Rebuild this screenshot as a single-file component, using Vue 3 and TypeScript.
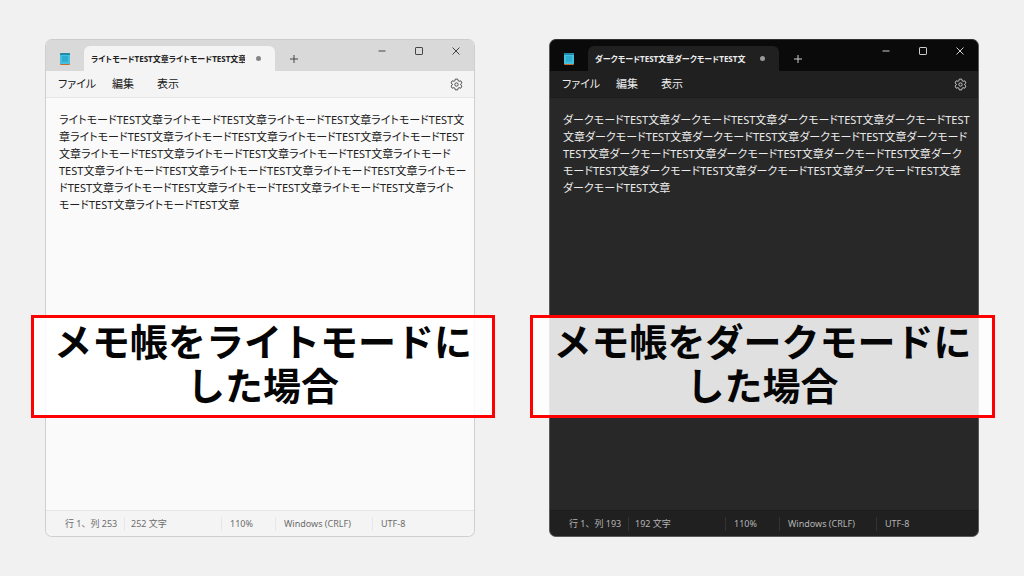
<script setup lang="ts">
interface Pad {
  theme: 'light' | 'dark'
  title: string
  lines: string[]
  status: string[]
  caption: string
}

const menus: string[] = ['ファイル', '編集', '表示']

const pads: Pad[] = [
  {
    theme: 'light',
    title: 'ライトモードTEST文章ライトモードTEST文章',
    lines: [
      'ライトモードTEST文章ライトモードTEST文章ライトモードTEST文章ライトモードTEST文',
      '章ライトモードTEST文章ライトモードTEST文章ライトモードTEST文章ライトモードTEST',
      '文章ライトモードTEST文章ライトモードTEST文章ライトモードTEST文章ライトモード',
      'TEST文章ライトモードTEST文章ライトモードTEST文章ライトモードTEST文章ライトモー',
      'ドTEST文章ライトモードTEST文章ライトモードTEST文章ライトモードTEST文章ライト',
      'モードTEST文章ライトモードTEST文章',
    ],
    status: ['行 1、列 253', '252 文字', '110%', 'Windows (CRLF)', 'UTF-8'],
    caption: 'メモ帳をライトモードに\nした場合',
  },
  {
    theme: 'dark',
    title: 'ダークモードTEST文章ダークモードTEST文',
    lines: [
      'ダークモードTEST文章ダークモードTEST文章ダークモードTEST文章ダークモードTEST',
      '文章ダークモードTEST文章ダークモードTEST文章ダークモードTEST文章ダークモード',
      'TEST文章ダークモードTEST文章ダークモードTEST文章ダークモードTEST文章ダーク',
      'モードTEST文章ダークモードTEST文章ダークモードTEST文章ダークモードTEST文章',
      'ダークモードTEST文章',
    ],
    status: ['行 1、列 193', '192 文字', '110%', 'Windows (CRLF)', 'UTF-8'],
    caption: 'メモ帳をダークモードに\nした場合',
  },
]
</script>

<template>
  <main class="page">
    <section v-for="pad in pads" :key="pad.theme" class="panel" :class="pad.theme">
      <div class="window">
        <header class="titlebar">
          <svg class="app-icon" viewBox="0 0 12 14" aria-hidden="true">
            <rect x="1" y="10" width="10" height="3" rx="1" fill="#c8682c" />
            <rect x="1" y="1" width="10" height="11" rx="1" fill="#43bfe0" />
            <path d="M1 2a1 1 0 0 1 1-1h8a1 1 0 0 1 1 1v1H1z" fill="#2389a8" />
            <path d="M3 5h6M3 7h6M3 9h6" stroke="#1c9ac2" stroke-width="1" />
          </svg>
          <button class="tab" type="button">
            <span class="tab-title">{{ pad.title }}</span>
            <span class="dot"></span>
          </button>
          <button class="icon-button add" type="button" aria-label="新しいタブ">
            <svg viewBox="0 0 10 10"><path d="M5 1v8M1 5h8" /></svg>
          </button>
          <div class="controls">
            <button class="icon-button" type="button" aria-label="最小化">
              <svg viewBox="0 0 10 10"><path d="M1.5 5h7" /></svg>
            </button>
            <button class="icon-button" type="button" aria-label="最大化">
              <svg viewBox="0 0 10 10"><rect x="1.5" y="1.5" width="7" height="7" rx="0.6" /></svg>
            </button>
            <button class="icon-button" type="button" aria-label="閉じる">
              <svg viewBox="0 0 10 10"><path d="M1.5 1.5l7 7M8.5 1.5l-7 7" /></svg>
            </button>
          </div>
        </header>
        <nav class="menubar">
          <button v-for="menu in menus" :key="menu" class="menu" type="button">{{ menu }}</button>
          <button class="icon-button settings" type="button" aria-label="設定">
            <svg viewBox="0 0 14 14">
              <path
                d="M5.7 1.2h2.6l.4 1.8 1.1.6 1.8-.6 1.3 2.3-1.4 1.2v1l1.4 1.2-1.3 2.3-1.8-.6-1.1.6-.4 1.8H5.7l-.4-1.8-1.1-.6-1.8.6-1.3-2.3 1.4-1.2v-1L1.1 5.3 2.4 3l1.8.6L5.3 3z"
              />
              <circle cx="7" cy="7" r="1.8" />
            </svg>
          </button>
        </nav>
        <textarea
          class="editor"
          wrap="off"
          spellcheck="false"
          aria-label="テキスト エディター"
          :value="pad.lines.join('\n')"
        ></textarea>
        <footer class="statusbar">
          <span v-for="item in pad.status" :key="item" class="status">{{ item }}</span>
        </footer>
      </div>
      <h2 class="caption">{{ pad.caption }}</h2>
    </section>
  </main>
</template>

<style>
body {
  margin: 0;
  background: #f1f1f1;
}
</style>

<style scoped>
.page {
  box-sizing: border-box;
  min-height: 100vh;
  display: grid;
  grid-template-columns: 1fr 1fr;
  gap: 74px;
  padding: 39px 45px;
  background: #f1f1f1;
  font-family: 'Noto Sans', 'Noto Sans CJK JP', sans-serif;
}

.panel {
  position: relative;
  display: flex;
  min-width: 0;
}

.light {
  --title: #d9d9d9;
  --bar: #f4f4f4;
  --paper: #fafafa;
  --line: #e6e6e6;
  --edge: #cfcfcf;
  --text: #202020;
  --muted: #6c6c6c;
  --dot: #868686;
  --icon: #444444;
}

.dark {
  --title: #0a0a0a;
  --bar: #202020;
  --paper: #282828;
  --line: #1d1d1d;
  --edge: #5a5a5a;
  --text: #ececec;
  --muted: #b4b4b4;
  --dot: #9a9a9a;
  --icon: #cfcfcf;
}

.window {
  flex: 1;
  min-width: 0;
  display: flex;
  flex-direction: column;
  box-sizing: border-box;
  border: 1px solid var(--edge);
  border-radius: 7px;
  overflow: hidden;
  background: var(--paper);
  color: var(--text);
}

.light .window {
  border-top-color: #cccccc;
}

.dark .window {
  border-top-color: #303030;
}

button {
  margin: 0;
  padding: 0;
  border: 0;
  background: none;
  color: inherit;
  font: inherit;
}

.titlebar {
  display: flex;
  align-items: flex-end;
  height: 31px;
  flex: none;
  background: var(--title);
}

.app-icon {
  width: 12px;
  height: 14px;
  margin: 0 13px 5px;
  flex: none;
}

.tab {
  position: relative;
  display: flex;
  align-items: center;
  width: 191px;
  height: 25px;
  padding: 0 14px 0 7px;
  box-sizing: border-box;
  border-radius: 6px 6px 0 0;
  background: var(--bar);
  font-size: 8px;
  font-weight: 700;
}

.tab-title {
  flex: 1;
  overflow: hidden;
  white-space: nowrap;
  text-align: left;
  font-feature-settings: 'palt';
  line-height: 16px;
}

.dot {
  width: 5px;
  height: 5px;
  margin-left: 11px;
  border-radius: 50%;
  background: var(--dot);
}

.icon-button {
  display: flex;
  align-items: center;
  justify-content: center;
  height: 22px;
}

.icon-button svg {
  width: 10px;
  height: 10px;
  fill: none;
  stroke: var(--icon);
  stroke-width: 1;
}

.add {
  width: 38px;
  height: 24px;
}

.controls {
  display: flex;
  align-self: flex-start;
  margin-left: auto;
}

.controls .icon-button {
  width: 37px;
}

.menubar {
  display: grid;
  grid-template-columns: 54px 45px 45px 1fr;
  align-items: center;
  height: 26px;
  flex: none;
  padding: 0 11px 0 12px;
  border-bottom: 1px solid var(--line);
  background: var(--bar);
}

.menu {
  justify-self: start;
  font-size: 11px;
  line-height: 16px;
  white-space: nowrap;
  font-feature-settings: 'palt';
}

.settings {
  justify-self: end;
}

.settings svg {
  width: 13px;
  height: 13px;
}

.editor {
  flex: 1;
  min-height: 0;
  margin: 0;
  padding: 13px 0 0 13px;
  border: 0;
  outline: 0;
  resize: none;
  overflow: hidden;
  background: var(--paper);
  color: var(--text);
  font-family: inherit;
  font-size: 11px;
  line-height: 17px;
  font-feature-settings: 'palt';
}

.statusbar {
  display: grid;
  grid-template-columns: 78px 97px 54px 97px 1fr;
  align-items: center;
  height: 25px;
  flex: none;
  border-top: 1px solid var(--line);
  background: var(--bar);
  color: var(--muted);
  font-size: 9px;
}

.status {
  height: 14px;
  padding-left: 8px;
  border-left: 1px solid var(--line);
  line-height: 14px;
  white-space: nowrap;
}

.dark .status {
  border-left-color: #333333;
}

.status:first-child {
  padding-left: 18px;
  border-left-color: transparent;
}

.status:nth-child(2) {
  padding-left: 6px;
}

.caption {
  position: absolute;
  top: 276px;
  left: -14px;
  right: -20px;
  box-sizing: border-box;
  height: 103px;
  margin: 0;
  border: 3px solid #ff0000;
  background: rgba(255, 255, 255, 0.86);
  color: #050505;
  font-family: 'Noto Sans CJK JP', sans-serif;
  font-size: 38px;
  font-weight: 700;
  line-height: 44px;
  text-align: center;
  white-space: pre-line;
}

.dark .caption {
  left: -19px;
  right: -16px;
}
</style>
